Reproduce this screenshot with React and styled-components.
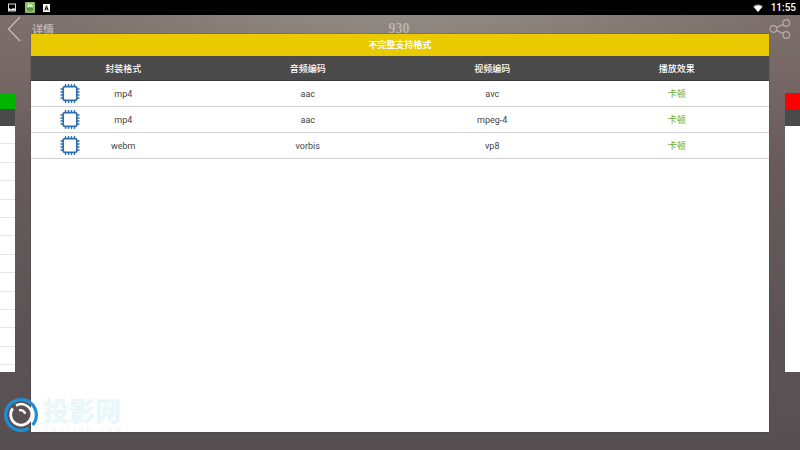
import React from "react";
import styled, { createGlobalStyle } from "styled-components";

const GlobalStyle = createGlobalStyle`
  * {
    box-sizing: border-box;
  }

  body {
    margin: 0;
    font-family: Roboto, "Noto Sans CJK SC", sans-serif;
  }

  button {
    display: flex;
    padding: 0;
    border: 0;
    background: none;
    cursor: pointer;
  }
`;

const PageStyled = styled.div`
  position: relative;
  display: flex;
  flex-direction: column;
  min-height: 100vh;
  overflow: hidden;
  background:
    radial-gradient(
      ellipse 50% 24% at 50% 0,
      rgba(170, 170, 158, 0.55),
      rgba(170, 170, 158, 0)
    ),
    linear-gradient(#7d6e69 0%, #7a6c68 10%, #665a5c 38%, #5c5255 75%, #575052 100%);
`;

const StatusBarStyled = styled.div`
  display: flex;
  align-items: center;
  justify-content: space-between;
  height: 15px;
  padding: 0 4px 0 7px;
  background: #000;
  color: #fff;
  font-size: 10px;
  font-weight: 500;
`;

const StatusGroup = styled.div`
  display: flex;
  align-items: center;
  gap: 8px;
`;

const HeaderStyled = styled.header`
  display: grid;
  grid-template-columns: 1fr auto 1fr;
  align-items: center;
  height: 28px;
  padding: 0 9px 0 7px;
  color: #bbb3ae;

  .header-left {
    display: flex;
    align-items: center;
    gap: 11px;
  }

  .header-label {
    font-size: 11px;
    font-weight: 700;
  }

  .header-share {
    justify-self: end;
  }
`;

const Score = styled.h1`
  margin: 0;
  font-family: "Liberation Serif", serif;
  font-size: 14px;
  font-weight: 700;
`;

const PagerStyled = styled.main`
  display: flex;
  flex: 1;
  justify-content: space-between;
  padding: 50px 0 78px;
`;

const SideCardStyled = styled.div`
  display: flex;
  flex-direction: column;
  width: 15px;
  padding-bottom: 7px;
  background: #fff;

  .side-title {
    height: 16px;
    background: ${(props) => props.$color};
  }

  .side-heading {
    height: 17px;
    background: #4a4a4a;
  }

  .side-row {
    flex: 1;
    border-bottom: 1px solid ${(props) => (props.$lined ? "#e6e6e6" : "#fff")};
  }
`;

const DialogStyled = styled.section`
  position: absolute;
  top: 34px;
  right: 31px;
  bottom: 18px;
  left: 31px;
  background: #fff;
  box-shadow: 0 0 1px #352f31;
`;

const DialogTitle = styled.h2`
  height: 22px;
  margin: 0;
  background: #e9ca00;
  color: #fff;
  font-size: 9px;
  font-weight: 700;
  line-height: 22px;
  text-align: center;
`;

const TableStyled = styled.table`
  width: 100%;
  border-collapse: separate;
  border-spacing: 0;
  table-layout: fixed;
  font-size: 9px;
  text-align: center;

  th {
    height: 25px;
    padding: 0;
    border-bottom: 1px solid #3a3a3a;
    background: #4a4a4a;
    color: #fff;
    font-weight: 500;
  }

  td {
    height: 26px;
    padding: 0;
    border-bottom: 1px solid #d2d2d2;
    color: #444;
  }
`;

const FormatCell = styled.div`
  display: grid;
  grid-template-columns: 1fr auto 1fr;
  align-items: center;

  svg {
    margin-left: 29px;
  }
`;

const Effect = styled.span`
  color: #66ac2e;
`;

const BrandStyled = styled.div`
  position: absolute;
  bottom: 16px;
  left: 4px;
  display: flex;
  align-items: flex-end;
  gap: 5px;
  color: #e9f7fb;

  .brand-logo {
    margin-bottom: 2px;
  }

  .brand-name {
    font-size: 26px;
    font-weight: 900;
    line-height: 28px;
  }

  .brand-site {
    padding-left: 1px;
    font-size: 7px;
    letter-spacing: 3px;
    line-height: 8px;
  }
`;

const rows = [
  { id: 1, format: "mp4", audio: "aac", video: "avc", effect: "卡顿" },
  { id: 2, format: "mp4", audio: "aac", video: "mpeg-4", effect: "卡顿" },
  { id: 3, format: "webm", audio: "vorbis", video: "vp8", effect: "卡顿" },
];

const SIDE_ROWS = 13;

const PictureIcon = () => (
  <svg width="10" height="9" viewBox="0 0 10 9">
    <rect x="1.5" y="1" width="7" height="7" fill="none" stroke="#ddd" />
    <path d="M2 7.5V5l2 1.2L6.5 5 8 6v1.5z" fill="#eee" />
  </svg>
);

const RobotIcon = () => (
  <svg width="10" height="11" viewBox="0 0 10 11">
    <rect width="10" height="11" rx="1" fill="#8cbc63" />
    <path d="M2 5a3 3 0 0 1 6 0z" fill="#d6ecc0" />
    <path d="M2.7 1l1 1.5M7.3 1l-1 1.5" stroke="#d6ecc0" strokeWidth=".6" />
    <path d="M2 5.8h6v2.4H2zM3.3 8h1v2h-1zM5.7 8h1v2h-1z" fill="#5d9140" />
  </svg>
);

const LetterIcon = () => (
  <svg width="7" height="8" viewBox="0 0 7 8">
    <rect width="7" height="8" fill="#fff" />
    <path d="M1.8 6.5L3.5 1.8l1.7 4.7M2.4 5h2.2" fill="none" stroke="#000" />
  </svg>
);

const WifiIcon = () => (
  <svg width="10" height="8" viewBox="0 0 10 8">
    <path d="M0 2.2Q5-1.6 10 2.2L5 8z" fill="#777" />
    <path d="M.9 3Q5 .2 9.1 3L5 8z" fill="#fff" />
  </svg>
);

const BackIcon = () => (
  <svg width="14" height="26" viewBox="0 0 14 26">
    <path d="M13 1L1.5 13 13 25" fill="none" stroke="#c1bab6" strokeWidth="1.4" />
  </svg>
);

const ShareIcon = () => (
  <svg width="22" height="20" viewBox="0 0 22 20" fill="none" stroke="#b5adaa" strokeWidth="1.2">
    <circle cx="4.3" cy="10" r="3.3" />
    <circle cx="17.3" cy="4" r="3.3" />
    <circle cx="17.3" cy="16" r="3.3" />
    <path d="M7.3 8.6l7-3.2M7.3 11.4l7 3.2" />
  </svg>
);

const ChipIcon = () => (
  <svg width="20" height="20" viewBox="0 0 20 20" fill="none" stroke="#2e6eae">
    <rect x="3.2" y="2.7" width="13.6" height="13.6" rx="1.8" strokeWidth="1.7" />
    <path
      d="M5.5 0v2.5M8.5 0v2.5M11.5 0v2.5M14.5 0v2.5M5.5 16.5V19M8.5 16.5V19M11.5 16.5V19M14.5 16.5V19M.5 5H3M.5 8H3M.5 11H3M.5 14H3M17 5h2.5M17 8h2.5M17 11h2.5M17 14h2.5"
      strokeWidth="1.3"
    />
  </svg>
);

const BrandLogo = () => (
  <svg className="brand-logo" width="34" height="34" viewBox="0 0 34 34" fill="none">
    <path d="M25 30.2A15.4 15.4 0 1 1 28.3 6.5" stroke="#1d8fd6" strokeWidth="3.2" />
    <path d="M28 6.2A15.4 15.4 0 0 1 28.6 27" stroke="#1d8fd6" strokeWidth="3.2" />
    <path d="M12 7.6A10.4 10.4 0 0 1 27.3 19.2" stroke="#fff" strokeWidth="2.4" />
    <path d="M8.8 10.4A10.4 10.4 0 1 0 27.2 19.2" stroke="#fff" strokeWidth="2.8" />
    <path d="M15 12.2a6 6 0 0 1 6.3 3.6" stroke="#fff" strokeWidth="2.4" />
  </svg>
);

const SideCard = ({ color, lined }) => (
  <SideCardStyled $color={color} $lined={lined}>
    <div className="side-title" />
    <div className="side-heading" />
    {Array.from({ length: SIDE_ROWS }, (_, index) => (
      <div className="side-row" key={index} />
    ))}
  </SideCardStyled>
);

const FormatTable = () => (
  <TableStyled>
    <thead>
      <tr>
        <th scope="col">封装格式</th>
        <th scope="col">音频编码</th>
        <th scope="col">视频编码</th>
        <th scope="col">播放效果</th>
      </tr>
    </thead>
    <tbody>
      {rows.map((row) => (
        <tr key={row.id}>
          <td>
            <FormatCell>
              <ChipIcon />
              <span>{row.format}</span>
            </FormatCell>
          </td>
          <td>{row.audio}</td>
          <td>{row.video}</td>
          <td>
            <Effect>{row.effect}</Effect>
          </td>
        </tr>
      ))}
    </tbody>
  </TableStyled>
);

const App = () => {
  return (
    <>
      <GlobalStyle />
      <PageStyled>
        <StatusBarStyled>
          <StatusGroup>
            <PictureIcon />
            <RobotIcon />
            <LetterIcon />
          </StatusGroup>
          <StatusGroup>
            <WifiIcon />
            <span>11:55</span>
          </StatusGroup>
        </StatusBarStyled>

        <HeaderStyled>
          <div className="header-left">
            <button type="button" aria-label="返回">
              <BackIcon />
            </button>
            <span className="header-label">详情</span>
          </div>
          <Score>930</Score>
          <button className="header-share" type="button" aria-label="分享">
            <ShareIcon />
          </button>
        </HeaderStyled>

        <PagerStyled>
          <SideCard color="#00b400" lined />
          <SideCard color="#fe0000" />
        </PagerStyled>

        <DialogStyled role="dialog" aria-labelledby="dialog-title">
          <DialogTitle id="dialog-title">不完整支持格式</DialogTitle>
          <FormatTable />
        </DialogStyled>

        <BrandStyled>
          <BrandLogo />
          <div>
            <div className="brand-name">投影网</div>
            <div className="brand-site">TOUYING.COM</div>
          </div>
        </BrandStyled>
      </PageStyled>
    </>
  );
};

export default App;
